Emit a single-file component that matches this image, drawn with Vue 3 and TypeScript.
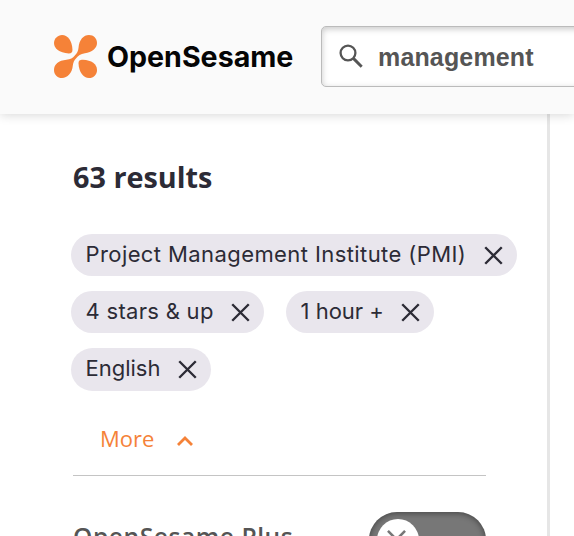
<script setup lang="ts">
interface Filter { label: string; kind: string }

const query = 'management'
const filters: Filter[] = [
  { label: 'Project Management Institute (PMI)', kind: 'provider' },
  { label: '4 stars & up', kind: 'rating' },
  { label: '1 hour +', kind: 'duration' },
  { label: 'English', kind: 'language' },
]
</script>

<template>
  <div class="page">
    <header class="header">
      <div class="brand">
        <svg class="mark" viewBox="0 0 128 128" fill="#f58238">
          <path d="M24 0C11 0 0 11 0 24C0 39 15 54 44 55C52 55 55 52 55 44C54 16 40 0 24 0Z" />
          <path d="M104 0C118 0 128 10 128 24C128 40 113 52 92 54C79 56 72 61 66 69C60 75 57 82 56 91C54 114 40 128 24 128C10 128 0 118 0 104C0 88 14 76 37 74C49 73 56 68 62 61C69 54 72 48 73 38C75 14 88 0 104 0Z" />
          <path d="M104 128C118 128 128 118 128 104C128 87 112 75 86 74C76 74 73 77 73 85C74 112 88 128 104 128Z" />
        </svg>
        <span class="wordmark">OpenSesame</span>
      </div>
      <div class="search">
        <svg class="magnifier" viewBox="0 0 24 24" fill="none" stroke="#555" stroke-width="2.3">
          <circle cx="9" cy="9" r="7.4" />
          <path d="M14.4 14.4L22.7 22.7" stroke-width="2.9" />
        </svg>
        <span class="query">{{ query }}</span>
      </div>
    </header>
    <div class="body">
      <aside class="sidebar">
        <h1 class="count">63 results</h1>
        <div class="chips">
          <div v-for="f in filters" :key="f.kind" class="chip" :class="f.kind">
            <span class="label">{{ f.label }}</span>
            <svg class="cross" viewBox="0 0 20 20"><path d="M1.3 1.3L18.7 18.7M18.7 1.3L1.3 18.7" /></svg>
          </div>
        </div>
        <div class="more">
          <span class="more-label">More</span>
          <svg class="chevron" viewBox="0 0 16 10"><path d="M1 9L8 2L15 9" /></svg>
        </div>
        <div class="plus">
          <span class="plus-label">OpenSesame Plus</span>
          <div class="toggle">
            <div class="knob">
              <svg class="knob-cross" viewBox="0 0 20 20"><path d="M1 1L19 19M19 1L1 19" /></svg>
            </div>
          </div>
        </div>
      </aside>
    </div>
  </div>
</template>

<style>
body { margin: 0; overflow: hidden; }
</style>

<style scoped>
.page { width: 574px; height: 536px; overflow: hidden; background: #fff; display: flex; flex-direction: column; }
.header { box-sizing: border-box; height: 114px; flex: none; background: #fafafa; box-shadow: 0 1px 10px rgba(0, 0, 0, .16); display: flex; align-items: flex-start; padding: 26px 0 0 54px; z-index: 1; }
.brand { display: flex; align-items: center; width: 267px; flex: none; height: 61px; }
.mark { width: 43px; height: 43px; margin-right: 10px; }
.wordmark { font: 700 28.6px/40px Inter, sans-serif; color: #050505; letter-spacing: 0; white-space: nowrap; }
.search { box-sizing: border-box; width: 290px; height: 61px; flex: none; border: 1px solid #bbb; border-radius: 5px; background: #fff; box-shadow: inset 0 2px 6px rgba(0, 0, 0, .22); display: flex; align-items: center; padding-left: 17px; }
.magnifier { width: 24px; height: 24px; margin-right: 15px; margin-top: -2px; }
.query { font: bold 25px/30px "Liberation Sans", sans-serif; color: #555; letter-spacing: .15px; }
.body { flex: 1; min-height: 0; display: flex; }
.sidebar { box-sizing: border-box; width: 550px; border-right: 3px solid #e6e6e6; padding: 43px 0 0 71px; }
.count { margin: 0 0 0 2px; font: bold 28.8px/40px "Open Sans", sans-serif; color: #2c2b36; }
.chips { display: flex; flex-wrap: wrap; column-gap: 22px; row-gap: 14.6px; margin-top: 37px; width: 460px; }
.chip { box-sizing: border-box; height: 42.6px; border-radius: 22px; background: #e9e6ed; display: flex; align-items: center; justify-content: space-between; padding: 0 14px 0 14.5px; }
.label { font: 400 22px/32px Inter, sans-serif; color: #2c2b36; white-space: nowrap; margin-top: -2.4px; }
.chip.provider { width: 446px; height: 42.2px; }
.provider .label { letter-spacing: .41px; }
.rating { width: 193px; }
.rating .label { letter-spacing: .3px; }
.duration { width: 148px; }
.language { width: 140px; }
.cross { width: 19px; height: 19px; flex: none; fill: none; stroke: #2c2b36; stroke-width: 2.5; }
.more { display: flex; align-items: center; height: 30px; margin: 34.4px 0 0 29px; font: 22px/30px "Open Sans", sans-serif; color: #f58238; }
.more-label { margin-top: -3px; }
.chevron { width: 16px; height: 10px; margin: 2px 0 0 23px; fill: none; stroke: #f58238; stroke-width: 2.8; }
.plus { box-sizing: border-box; width: 413px; margin: 20px 0 0 2px; border-top: 1px solid #c4c4c4; padding-top: 36px; display: flex; justify-content: space-between; align-items: flex-start; }
.plus-label { font: 600 24.6px/34px "Open Sans", sans-serif; color: #555; letter-spacing: .55px; margin-top: 8px; white-space: nowrap; }
.toggle { box-sizing: border-box; width: 117px; height: 56px; border-radius: 28px; background: #777; box-shadow: inset 0 1px 6px rgba(0, 0, 0, .45); padding: 7px 8px; }
.knob { width: 42px; height: 42px; border-radius: 50%; background: #fff; display: flex; align-items: center; justify-content: center; }
.knob-cross { width: 19px; height: 19px; margin-right: 3px; fill: none; stroke: #777; stroke-width: 2.7; }
</style>
